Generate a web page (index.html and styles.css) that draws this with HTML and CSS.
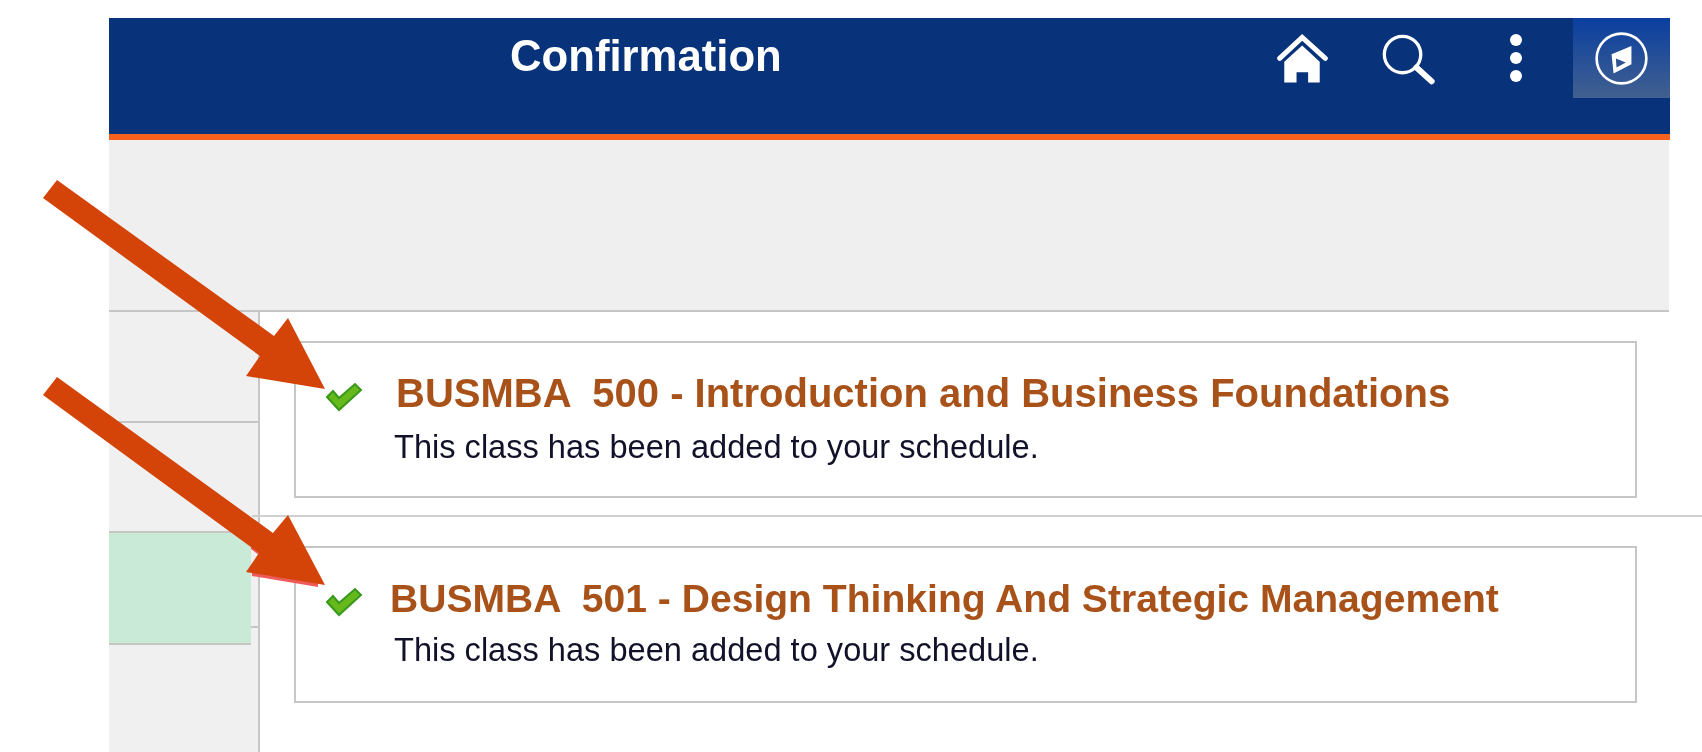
FILE: index.html
```html
<!DOCTYPE html>
<html lang="en">
<head>
    <meta charset="UTF-8">
    <title>Confirmation</title>
    <link rel="stylesheet" href="styles.css">
</head>
<body>
    <div class="page">
        <div class="banner">
            <h1 class="banner-title">Confirmation</h1>
            <div class="banner-icons">
                <svg class="icon-home" viewBox="0 0 154 150" width="51" height="50">
                    <path d="M8 76 L76 13 L146 76" fill="none" stroke="#fff" stroke-width="15" stroke-linecap="round" stroke-linejoin="miter"/>
                    <path d="M76 37 L129 86 V149 H94 V118 H59 V149 H22 V86 Z" fill="#fff"/>
                </svg>
                <svg class="icon-search" viewBox="0 0 170 160" width="57" height="53">
                    <circle cx="70" cy="65" r="55" fill="none" stroke="#fff" stroke-width="10"/>
                    <path d="M112 104 L158 146" stroke="#fff" stroke-width="18" stroke-linecap="round"/>
                </svg>
                <svg class="icon-dots" viewBox="0 0 14 50" width="14" height="50">
                    <circle cx="7" cy="7" r="6" fill="#fff"/>
                    <circle cx="7" cy="25" r="6" fill="#fff"/>
                    <circle cx="7" cy="43" r="6" fill="#fff"/>
                </svg>
                <div class="nav-tile">
                    <svg viewBox="0 0 166 166" width="55" height="55">
                        <circle cx="83" cy="83" r="75" fill="none" stroke="#fff" stroke-width="8"/>
                        <path d="M53 70 L113 45 V100 L59 128 Z" fill="#fff"/>
                        <path d="M66 83 L96 95 L68 110 Z" fill="#2f5393"/>
                    </svg>
                </div>
            </div>
        </div>
        <div class="subbar"></div>
        <div class="content">
            <div class="sidebar">
                <div class="side-item first"></div>
                <div class="side-item second"></div>
                <div class="side-item third">
                    <div class="side-selected"></div>
                </div>
            </div>
            <div class="main">
                <div class="result-row">
                    <div class="result-card">
                        <svg class="check" viewBox="0 0 38 30" width="38" height="30">
                            <path d="M2 15 L14 28 L36 8 L30 2 L14 16 L8 9 Z" fill="#65b91a" stroke="#38981c" stroke-width="2"/>
                        </svg>
                        <div>
                            <div class="class-title">BUSMBA  500 - Introduction and Business Foundations</div>
                            <div class="class-msg">This class has been added to your schedule.</div>
                        </div>
                    </div>
                </div>
                <div class="result-row">
                    <div class="result-card">
                        <svg class="check" viewBox="0 0 38 30" width="38" height="30">
                            <path d="M2 15 L14 28 L36 8 L30 2 L14 16 L8 9 Z" fill="#65b91a" stroke="#38981c" stroke-width="2"/>
                        </svg>
                        <div>
                            <div class="class-title second-title">BUSMBA  501 - Design Thinking And Strategic Management</div>
                            <div class="class-msg">This class has been added to your schedule.</div>
                        </div>
                    </div>
                </div>
            </div>
        </div>
    </div>
    <svg class="arrows" viewBox="0 0 1702 752" width="1702" height="752">
        <path d="M252 570 L318 582 L318 587 L252 576 Z" fill="#ee5a5a"/>
        <path d="M251 545 L259 551 L259 555 L251 549 Z" fill="#ee5a5a"/>
        <path d="M57 180 L274 336 L288 318 L325 389 L246 376 L260 356 L43 198 Z" fill="#d44307"/>
        <path d="M57 377 L273 533 L288 515 L325 585 L246 572 L259 553 L43 395 Z" fill="#d44307"/>
    </svg>
</body>
</html>
```

FILE: styles.css
```css
html, body {
    margin: 0;
    background-color: white;
    font-family: "Liberation Sans", Arial, sans-serif;
}
.page {
    box-sizing: border-box;
    height: 752px;
    padding: 18px 0 0 109px;
    overflow: hidden;
}
.banner {
    display: flex;
    justify-content: space-between;
    align-items: flex-start;
    width: 1561px;
    height: 116px;
    background-color: #08337a;
    border-bottom: 6px solid #f9611e;
}
.banner-title {
    margin: 13px 0 0 401px;
    color: white;
    font-size: 43.7px;
    font-weight: bold;
    line-height: 50px;
    filter: blur(0.4px);
}
.banner-icons {
    display: flex;
    align-items: flex-start;
}
.icon-home {
    margin: 15px 51px 0 0;
}
.icon-search {
    margin: 15px 73px 0 0;
}
.icon-dots {
    margin: 15px 50px 0 0;
}
.nav-tile {
    display: flex;
    align-items: center;
    justify-content: center;
    width: 97px;
    height: 80px;
    background: linear-gradient(#0a3fa0, #41608f);
}
.subbar {
    width: 1560px;
    height: 170px;
    background-color: #efefef;
    border-bottom: 2px solid #c6c6c6;
}
.content {
    display: flex;
    width: 1593px;
    height: 440px;
}
.sidebar {
    width: 149px;
    flex-shrink: 0;
    background-color: #f0f0f0;
    border-right: 2px solid #c6c6c6;
}
.side-item {
    border-bottom: 2px solid #c6c6c6;
}
.first {
    height: 109px;
}
.second {
    height: 108px;
}
.third {
    height: 93px;
}
.side-selected {
    box-sizing: border-box;
    width: 142px;
    height: 112px;
    background-color: #c8ead6;
    border-bottom: 2px solid #c6c6c6;
}
.main {
    flex: 1;
    margin-left: -8px;
}
.result-row {
    padding: 29px 0 17px 42px;
}
.result-row:first-child {
    border-bottom: 2px solid #cfcfcf;
}
.result-card {
    box-sizing: border-box;
    display: flex;
    align-items: flex-start;
    gap: 33px;
    width: 1343px;
    height: 157px;
    padding: 30px 0 0 29px;
    border: 2px solid #c6c6c6;
}
.check {
    flex-shrink: 0;
    margin-top: 9px;
}
.class-title {
    color: #a8521a;
    font-size: 40px;
    font-weight: bold;
    line-height: 40px;
    white-space: pre;
    filter: blur(0.5px);
}
.second-title {
    margin: 1px 0 -3px -6px;
    font-size: 39.1px;
}
.class-msg {
    color: #11112a;
    font-size: 32.6px;
    line-height: 36px;
    margin: 16px 0 0 -2px;
    filter: blur(0.4px);
}
.arrows {
    position: absolute;
    top: 0;
    left: 0;
    pointer-events: none;
}
```
